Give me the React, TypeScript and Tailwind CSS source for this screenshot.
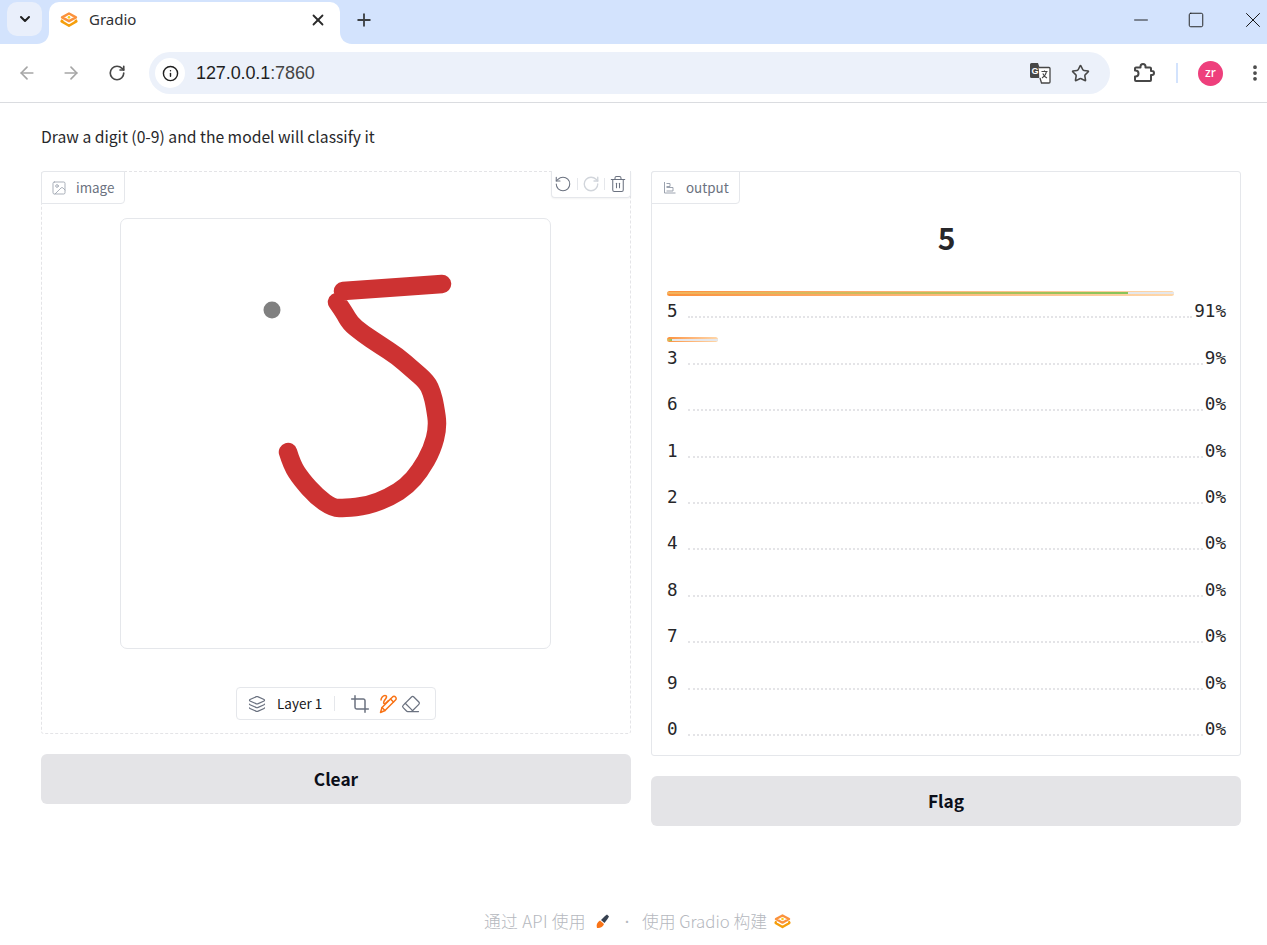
import React from "react";
import { ArrowLeft, ArrowRight, RotateCw, RotateCcw, Info, Star, Trash2, ChevronDown, X, Plus, Minus, Square, EllipsisVertical, Image as ImageIcon, Layers, Crop, Eraser } from "lucide-react";

const sans = "font-['Noto_Sans_CJK_SC','Noto_Sans',sans-serif]";

function GradioLogo({ size = 18 }: { size?: number }) {
  return (
    <svg width={size} height={size * 0.85} viewBox="0 0 22 18.700" fill="none">
      <path d="M11 1.800 19.500 6.500 11 11.200 2.500 6.500Z" stroke="#fb923c" strokeWidth="3" strokeLinejoin="round" />
      <path d="M3 9.500 2 11.500 11 16.800 20 11.500 19 9.500" stroke="#f59e0b" strokeWidth="3" strokeLinejoin="round" />
      <circle cx="11" cy="6.500" r="1.600" fill="#facc15" />
    </svg>
  );
}

function TranslateIcon() {
  return (
    <svg width="22" height="22" viewBox="0 0 22 22">
      <path d="M1 2.500A1.500 1.500 0 0 1 2.500 1H9l1.200 3.500 0 11.500H2.500A1.500 1.500 0 0 1 1 14.500Z" fill="#474747" />
      <text x="2.600" y="11.500" fontSize="9" fontWeight="700" fill="#fff" fontFamily="'Liberation Sans',sans-serif">G</text>
      <path d="M9.500 5.500H20a1 1 0 0 1 1 1V20a1 1 0 0 1-1 1h-7.500L11 16" fill="#fff" stroke="#474747" strokeWidth="1.300" />
      <path d="M12.500 9.500h6M15.500 8.500v1M17.500 9.500c-.6 3-2.400 5.200-4.500 6.500M13.800 11.500c.8 2 2.400 3.600 4.200 4.500" stroke="#474747" strokeWidth="1.100" fill="none" />
    </svg>
  );
}

function ExtensionIcon() {
  return (
    <svg width="22" height="20" viewBox="0 0 22 20" fill="none" stroke="#474747" strokeWidth="2" strokeLinejoin="round">
      <path d="M2 5.500a1 1 0 0 1 1-1h4.500V3.500a2.500 2.500 0 0 1 5 0v1H17a1 1 0 0 1 1 1V8h1a2 2 0 0 1 0 4h-1v5a1 1 0 0 1-1 1H3a1 1 0 0 1-1-1v-3.500h.5a3 3 0 0 0 0-6H2Z" />
    </svg>
  );
}

function Flare({ side }: { side: "left" | "right" }) {
  return (
    <svg
      width="12"
      height="12"
      viewBox="0 0 12 12"
      className={side === "left" ? "absolute bottom-0 left-[-12px]" : "absolute bottom-0 right-[-12px]"}
    >
      <path d={side === "left" ? "M12 0V12H0C7 12 12 7 12 0Z" : "M0 0V12H12C5 12 0 7 0 0Z"} fill="#ffffff" />
    </svg>
  );
}

function BrowserChrome() {
  return (
    <div className="flex flex-col">
      <div className="flex h-11 items-stretch bg-[#d3e3fd]">
        <div className="flex w-[49px] shrink-0 pl-[7px] pt-[2px]">
          <div className="flex h-[34px] w-[35px] items-center justify-center rounded-[10px] bg-[#e9effb]">
            <ChevronDown size={16} strokeWidth={3} color="#1f1f1f" />
          </div>
        </div>
        <div className="relative mt-[2px] flex w-[291px] shrink-0 items-center rounded-t-[10px] bg-white pb-[7px] pl-[11px] pr-[13px]">
          <Flare side="left" />
          <Flare side="right" />
          <GradioLogo size={18} />
          <span className="ml-[11px] flex-1 font-['Noto_Sans',sans-serif] text-[15px] leading-none text-[#303134]">Gradio</span>
          <X size={18} strokeWidth={2.400} color="#2a2a2a" />
        </div>
        <div className="flex w-[48px] shrink-0 items-center justify-center pb-[5px]">
          <Plus size={20} strokeWidth={2.200} color="#3c4043" />
        </div>
        <div className="flex flex-1 items-center justify-end gap-[35px] pb-[5px] pr-[1px]">
          <Minus size={22} strokeWidth={1} color="#111" />
          <Square size={18} strokeWidth={1.300} color="#222" />
          <X size={26} strokeWidth={0.900} color="#111" />
        </div>
      </div>
      <div className="flex h-[59px] items-center rounded-tl-[10px] border-b border-[#dadce0] bg-white">
        <div className="flex w-[149px] shrink-0 items-center pl-[17px]">
          <ArrowLeft size={20} color="#a6a6a6" strokeWidth={2} />
          <ArrowRight size={20} color="#a6a6a6" strokeWidth={2} className="ml-[24px]" />
          <RotateCw size={18} color="#474747" strokeWidth={2.200} className="ml-[27px]" />
        </div>
        <div className="flex h-[42px] w-[961px] shrink-0 items-center rounded-full bg-[#ecf1fa] pl-[6px] pr-[20px]">
          <div className="flex h-[30px] w-[30px] items-center justify-center rounded-full bg-white">
            <Info size={17} strokeWidth={2} color="#1f1f1f" />
          </div>
          <span className="ml-[11px] flex-1 font-['Liberation_Sans',Arial,sans-serif] text-[18px] tracking-[-0.1px] text-[#1f1f1f]">
            127.0.0.1<span className="text-[#444]">:7860</span>
          </span>
          <TranslateIcon />
          <Star size={19} strokeWidth={2} color="#474747" className="ml-[20px]" />
        </div>
        <div className="flex flex-1 items-center pl-[23px]">
          <ExtensionIcon />
          <div className="ml-[21px] h-[20px] w-[2px] bg-[#d3e3fd]" />
          <div className="ml-[20px] flex h-[25px] w-[25px] items-center justify-center rounded-full bg-[#ee3f7c] font-['Noto_Sans',sans-serif] text-[12px] font-medium text-white">zr</div>
          <EllipsisVertical size={20} strokeWidth={2.500} color="#474747" className="ml-[22px]" />
        </div>
      </div>
    </div>
  );
}

function Stroke() {
  return (
    <svg className="h-[429px] w-[429px]" viewBox="121 219 429 429" fill="none">
      <circle cx="272" cy="310" r="8.500" fill="#808080" />
      <path
        d="M442 284 L400 287 L343 291 M337 302 Q344 312 347 317.500 Q350 323 356 328 Q362 333 371 339 Q380 345 388.500 350.500 Q397 356 404.500 362.500 Q412 369 419.500 375.500 Q427 382 429.500 387.500 Q432 393 433.500 399.500 Q435 406 436.500 416.500 Q438 427 435 438.500 Q432 450 426 460.500 Q420 471 413.500 478.500 Q407 486 398.500 491.500 Q390 497 378.500 501.500 Q367 506 356 507 Q345 508 339 508 Q333 508 325 502.500 Q317 497 309 488 Q301 479 296.500 472 Q292 465 288 452"
        stroke="#cd3232"
        strokeWidth="18.500"
        strokeLinecap="round"
        strokeLinejoin="round"
      />
    </svg>
  );
}

function PencilIcon() {
  return (
    <svg width="19" height="20" viewBox="0 0 19 20" fill="none" stroke="#f97316" strokeWidth="1.500" strokeLinecap="round" strokeLinejoin="round">
      <path d="M1.500 18.500 3 13.500 13.500 3a2 2 0 0 1 3 0 2 2 0 0 1 0 3L6 16.500Z" />
      <path d="M3 13.500 6 16.500M11.500 5l3 3" />
      <path d="M2 6c0-2 2-4.500 4-4.500S8 3 6.500 5 4 9 5 9.500 8 8 9.500 6.500" />
    </svg>
  );
}

function ImagePanel() {
  return (
    <div className="relative flex h-[563px] flex-col items-center rounded-[3px] border border-dashed border-[#e4e4e7] pt-[46px]">
      <div className="absolute left-[-1px] top-[-1px] flex h-[33px] items-center gap-[9px] rounded-br-[4px] rounded-tl-[3px] border border-[#e5e7eb] bg-white pl-[9px] pr-[10px] text-[13.400px] text-[#6b7280]">
        <ImageIcon size={16} strokeWidth={1.300} color="#9ca3af" />
        <span>image</span>
      </div>
      <div className="absolute right-[-1px] top-[-1px] flex h-[27px] items-center rounded-b-[4px] border border-t-0 border-[#e5e7eb] bg-white pl-[2px] pr-[3px] shadow-[0_1px_2px_rgba(0,0,0,0.05)]">
        <RotateCcw size={18} strokeWidth={1.400} color="#6b7280" />
        <div className="mx-[4.500px] h-[12px] w-px bg-[#e5e7eb]" />
        <RotateCw size={18} strokeWidth={1.800} color="#d1d5db" />
        <div className="mx-[4px] h-[12px] w-px bg-[#e5e7eb]" />
        <Trash2 size={18} strokeWidth={1.400} color="#6b7280" />
      </div>
      <div className="mr-[2px] h-[431px] w-[431px] overflow-hidden rounded-[7px] border border-[#e5e7eb]">
        <Stroke />
      </div>
      <div className="mt-[38px] flex h-[33px] w-[200px] items-center rounded-[4px] border border-[#e5e7eb] bg-white pl-[11px]">
        <Layers size={18} strokeWidth={1.600} color="#6b7280" />
        <span className="ml-[11px] text-[13.500px] text-[#18181b]">Layer 1</span>
        <div className="ml-[12px] h-[15px] w-px bg-[#e5e7eb]" />
        <Crop size={20} strokeWidth={1.800} color="#6b7280" className="ml-[15px]" />
        <span className="ml-[9px] flex"><PencilIcon /></span>
        <Eraser size={20} strokeWidth={1.500} color="#6b7280" className="ml-[3px]" />
      </div>
    </div>
  );
}

const rows: { label: string; pct: string; bar?: number; fill?: number }[] = [
  { label: "5", pct: "91%", bar: 507, fill: 91 },
  { label: "3", pct: "9%", bar: 51, fill: 9 },
  { label: "6", pct: "0%" },
  { label: "1", pct: "0%" },
  { label: "2", pct: "0%" },
  { label: "4", pct: "0%" },
  { label: "8", pct: "0%" },
  { label: "7", pct: "0%" },
  { label: "9", pct: "0%" },
  { label: "0", pct: "0%" },
];

function Row({ label, pct, bar, fill }: { label: string; pct: string; bar?: number; fill?: number }) {
  return (
    <div className="flex h-[46.400px] flex-col justify-end">
      {bar ? (
        <div
          className="relative mb-[4.500px] flex h-[5px] items-center overflow-hidden rounded-full bg-gradient-to-r from-[#fb923c] to-[#fed7aa]"
          style={{ width: bar }}
        >
          <div className="h-[2px] w-full bg-[#e5e7eb]">
            <div className="h-full bg-gradient-to-r from-[#f5b35c] to-[#86c45a]" style={{ width: `${fill}%` }} />
          </div>
        </div>
      ) : null}
      <div className="flex h-[22px] items-end font-['DejaVu_Sans_Mono',monospace] text-[17.600px] font-light leading-[22px] text-[#27272a]">
        <span>{label}</span>
        <div className="mb-[4px] ml-[10px] mr-[2px] flex-1 border-b-2 border-dotted border-[#e4e4e7]" />
        <span>{pct}</span>
      </div>
    </div>
  );
}

function OutputPanel() {
  return (
    <div className="relative flex h-[585px] flex-col rounded-[3px] border border-[#e5e7eb] pl-[15px] pr-[14px]">
      <div className="absolute left-[-1px] top-[-1px] flex h-[33px] items-center gap-[10px] rounded-br-[4px] rounded-tl-[3px] border border-[#e5e7eb] bg-white pl-[11px] pr-[10px] text-[13.400px] text-[#6b7280]">
        <svg width="13" height="13" viewBox="0 0 13 13" fill="none" stroke="#9ca3af" strokeWidth="1">
          <path d="M1.500 1v11h11M3.500 2.500h3.500v3H3.500M3.500 6.500H10v3.500H3.500" />
        </svg>
        <span>output</span>
      </div>
      <div className="mb-[22px] mt-[48px] flex h-[34px] items-center justify-center text-[30px] font-bold leading-none text-[#27272a]">5</div>
      <div className="flex flex-col">
        {rows.map((r) => (
          <Row key={r.label} {...r} />
        ))}
      </div>
    </div>
  );
}

function ActionButton({ children }: { children: React.ReactNode }) {
  return (
    <button className="flex h-[50px] w-full items-center justify-center rounded-[6px] bg-[#e4e4e7] text-[17.300px] font-semibold text-[#0b0f19]">
      {children}
    </button>
  );
}

export default function App() {
  return (
    <div className={`flex min-h-[945px] flex-col bg-white ${sans}`}>
      <BrowserChrome />
      <main className="flex flex-col pl-[41px] pr-[26px]">
        <p className="mt-[23px] h-[22px] text-[15.700px] leading-[22px] text-[#27272a]">Draw a digit (0-9) and the model will classify it</p>
        <div className="mt-[23px] flex items-start gap-[20px]">
          <div className="flex w-[590px] flex-col gap-[20px]">
            <ImagePanel />
            <ActionButton>Clear</ActionButton>
          </div>
          <div className="flex w-[590px] flex-col gap-[20px]">
            <OutputPanel />
            <ActionButton>Flag</ActionButton>
          </div>
        </div>
      </main>
      <footer className="mt-[83px] flex items-center justify-center pl-[8px] text-[16.800px] font-light text-[#b5b8be]">
        <span className="tracking-[0.3px]">通过 API 使用</span>
        <svg width="18" height="18" viewBox="0 0 18 18" className="ml-[8px]">
          <path d="M3 15c-1-3 0-6 3-7.500l4 3.500C9 14 6 15.500 3 15Z" fill="#f97316" />
          <path d="M7 7l4-4 2-1.500 2 2L13.500 6l-3 4Z" fill="#374151" />
        </svg>
        <span className="mx-[9px] text-[12px]">·</span>
        <span>使用 Gradio 构建</span>
        <span className="ml-[7px] flex"><GradioLogo size={17} /></span>
      </footer>
    </div>
  );
}
